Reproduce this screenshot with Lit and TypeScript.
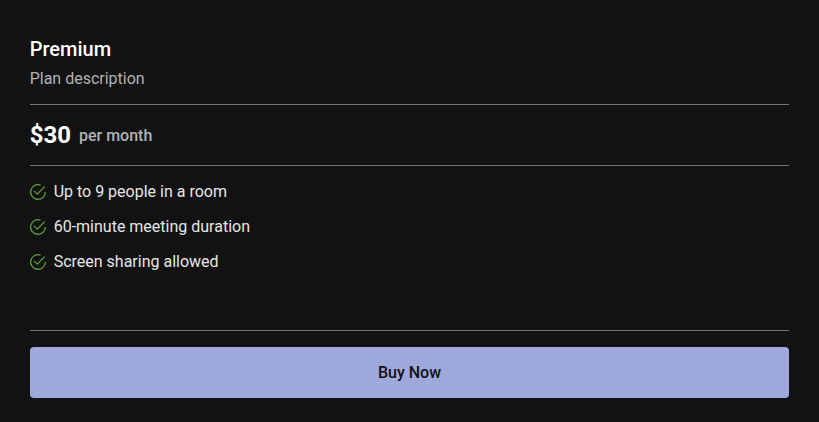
import { LitElement, html, css } from "lit";
import { customElement, property } from "lit/decorators.js";

@customElement("plan-feature")
class PlanFeature extends LitElement {
  static styles = css`
    :host { display: flex; align-items: center; height: 19px; }
    .icon { width: 16px; height: 16px; margin-right: 8px; flex: none; fill: none; stroke: #5a9e33; stroke-width: 1.65; stroke-linejoin: miter; }
  `;
  render() {
    return html`<svg class="icon" viewBox="2 2 20 20">
        <path d="M15.2 3.4A9.17 9.17 0 1 0 21.17 12" />
        <path d="M7 10.6L11 14.7L20.3 5.3" />
      </svg><slot></slot>`;
  }
}

@customElement("app-root")
class AppRoot extends LitElement {
  @property({ attribute: false }) features = [
    "Up to 9 people in a room",
    "60-minute meeting duration",
    "Screen sharing allowed",
  ];

  static styles = css`
    :host {
      display: flex; flex-direction: column; box-sizing: border-box; height: 422px;
      padding: 37px 29.67px 24px; background: #121212; color: #fff;
      font: 400 16px/19px Roboto, sans-serif;
    }
    .title { margin: 0; font-size: 20px; line-height: 24px; font-weight: 500; }
    .description { margin: 8px 0 0; color: #b3b3b3; }
    .divider { height: 1px; background: #737373; flex: none; }
    .description + .divider { margin-top: 16px; }
    .price { display: flex; align-items: center; height: 60px; gap: 8px; }
    .amount { font-size: 24px; line-height: 28px; font-weight: 700; }
    .period { color: #b3b3b3; font-weight: 500; }
    .features { display: flex; flex-direction: column; gap: 16px; padding-top: 16px; flex: 1; color: #e6e6e6; }
    .buy {
      margin: 16px 0 0; padding: 0; height: 51px; flex: none; border: 0; border-radius: 4px;
      background: #9fa8da; color: #121212; font: 500 16px/19px Roboto, sans-serif;
    }
  `;
  render() {
    return html`
      <h2 class="title">Premium</h2>
      <p class="description">Plan description</p>
      <div class="divider"></div>
      <div class="price"><span class="amount">$30</span><span class="period">per month</span></div>
      <div class="divider"></div>
      <div class="features">${this.features.map((f) => html`<plan-feature>${f}</plan-feature>`)}</div>
      <div class="divider"></div>
      <button class="buy">Buy Now</button>
    `;
  }
}
